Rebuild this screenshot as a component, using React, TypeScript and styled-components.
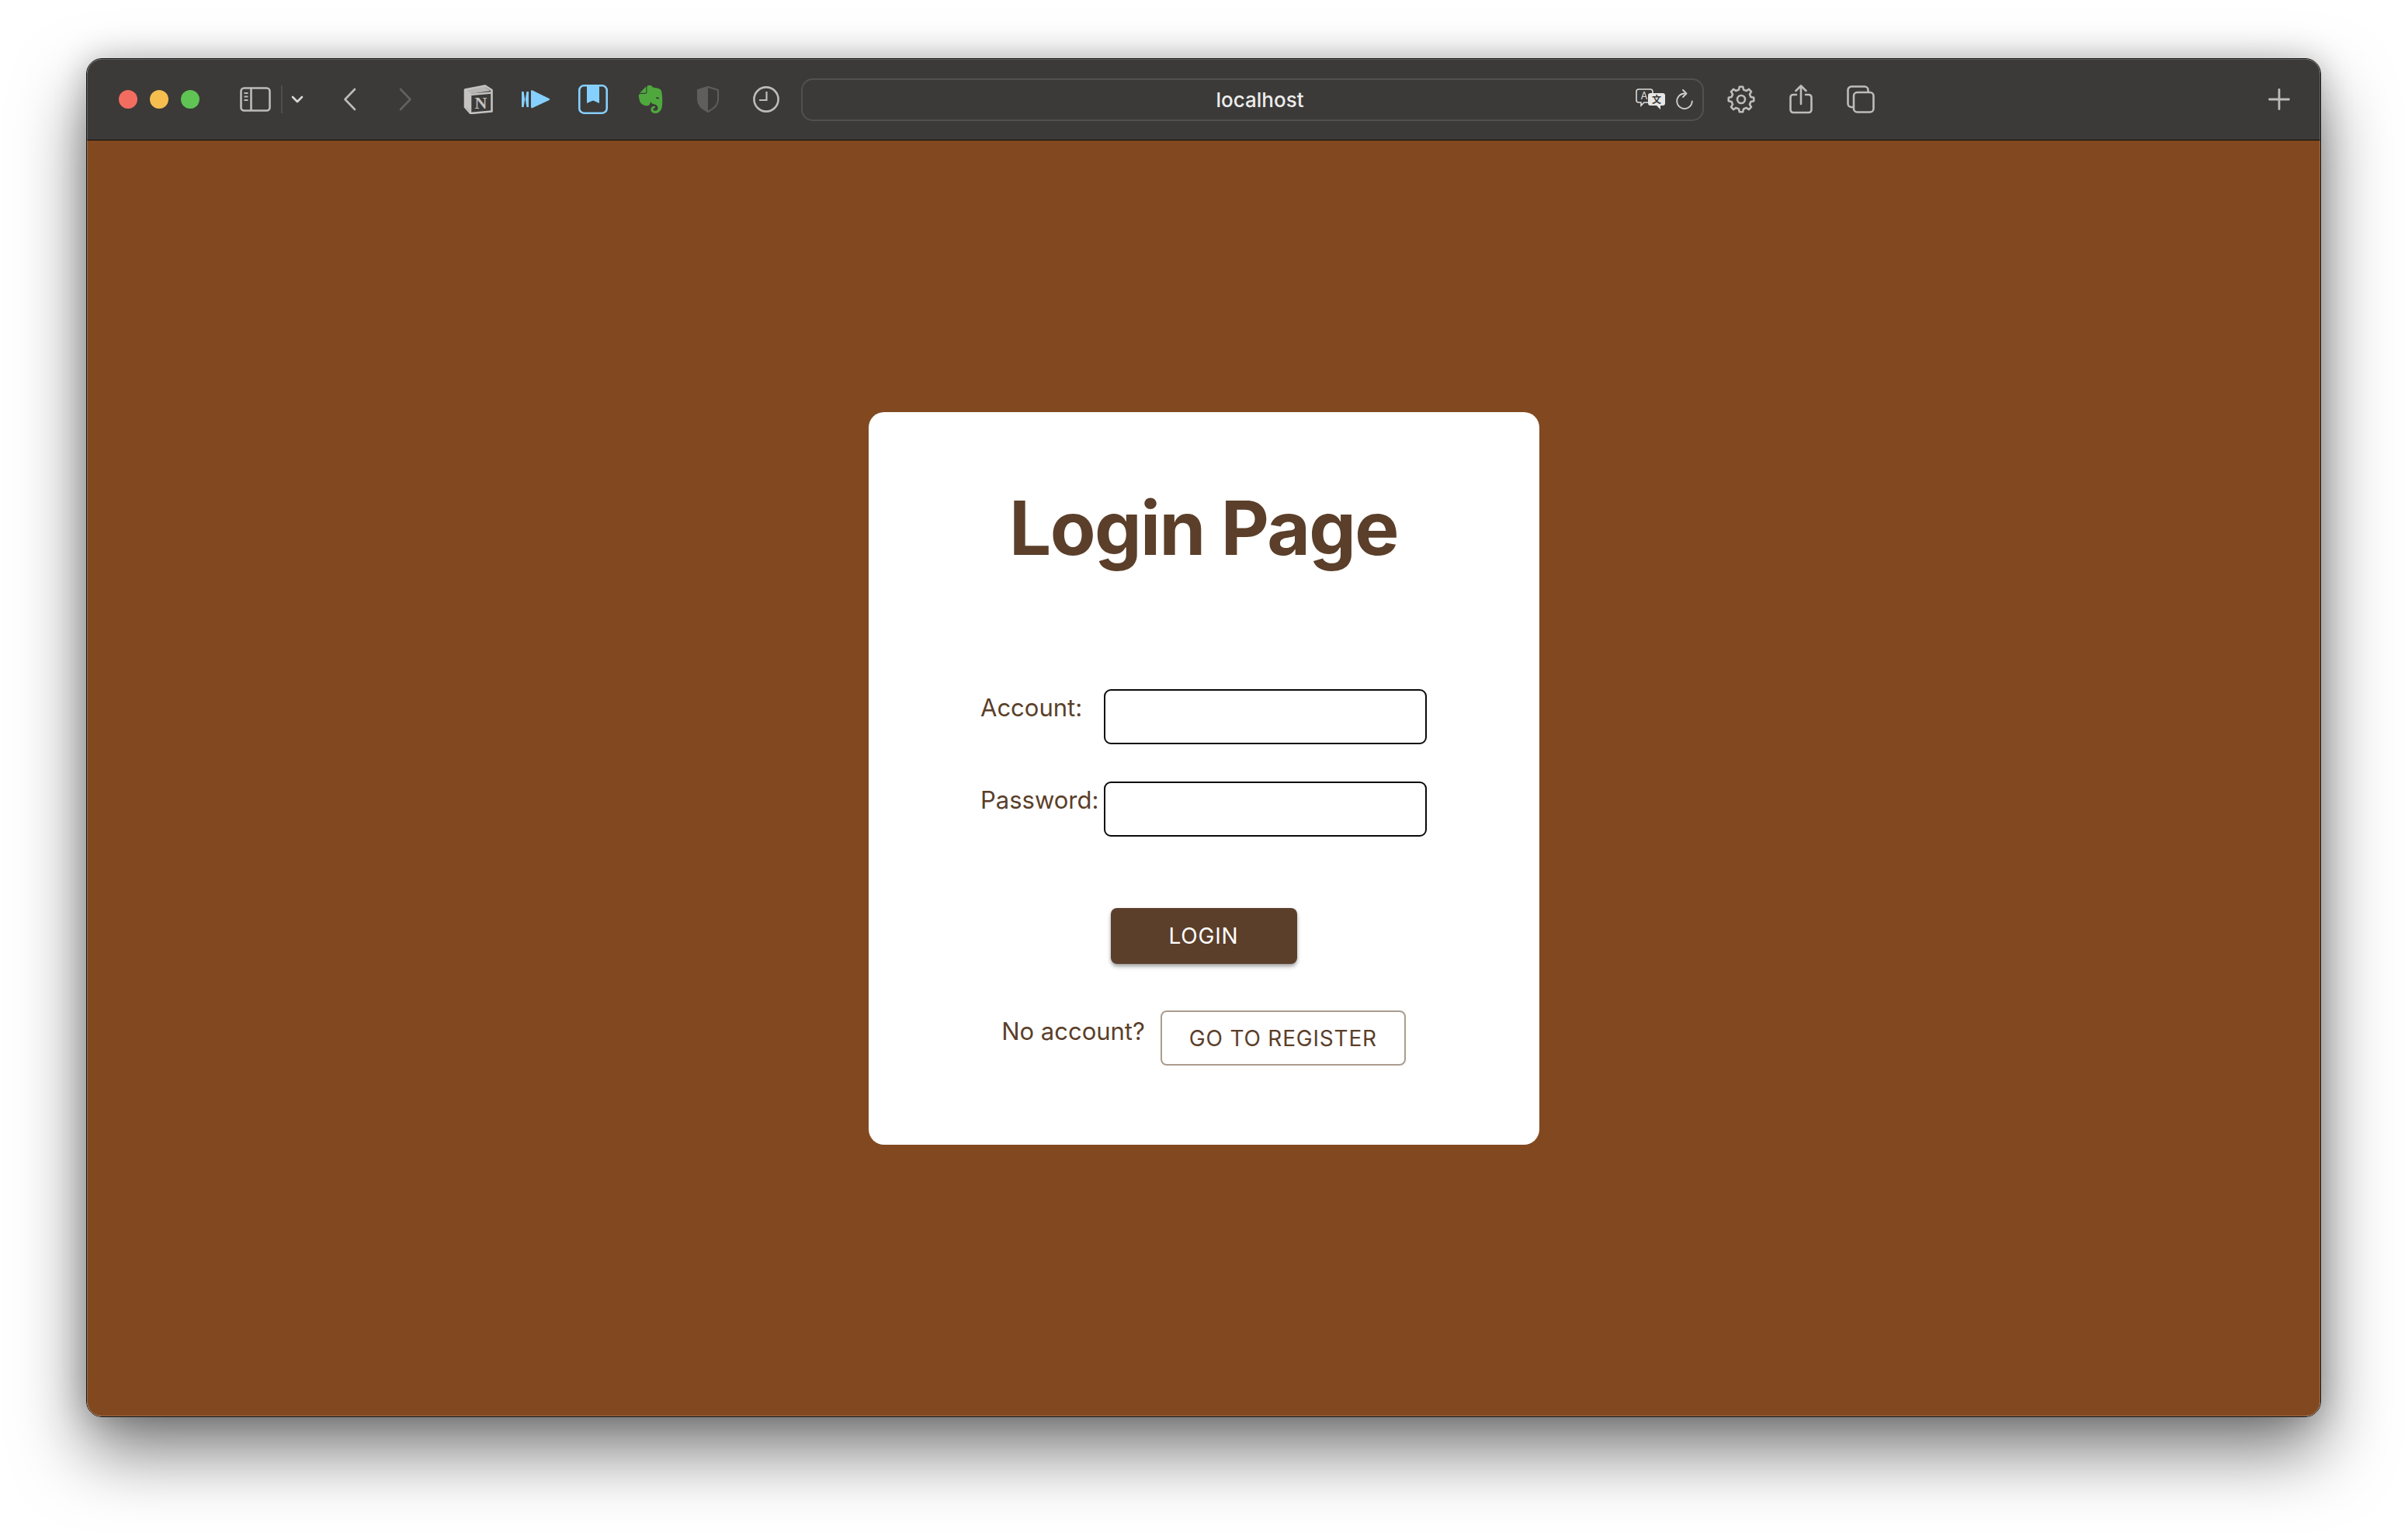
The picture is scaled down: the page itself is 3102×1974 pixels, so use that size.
import React from "react";
import styled, { createGlobalStyle } from "styled-components";
import { SiEvernote } from "react-icons/si";

const $brown = "#5b3f2a";
const $icon = "#bdbcba";

const GlobalStyle = createGlobalStyle`
  html, body {
    margin: 0;
    background: #fff;
    overflow: hidden;
  }
  * {
    box-sizing: border-box;
  }
`;

const Page = styled.div`
  width: 3102px;
  height: 1974px;
  padding: 75px 112px 148px 111px;
  font-family: Inter, "Liberation Sans", sans-serif;
`;

const Window = styled.div`
  position: relative;
  display: flex;
  flex-direction: column;
  height: 100%;
  border: 1px solid #111;
  border-radius: 20px;
  overflow: hidden;
  box-shadow: 0 44px 90px rgba(0, 0, 0, 0.52), 0 0 40px rgba(0, 0, 0, 0.22);
  &::after {
    content: "";
    position: absolute;
    inset: 0;
    border: 1px solid rgba(255, 255, 255, 0.2);
    border-radius: 19px;
    pointer-events: none;
  }
`;

const Toolbar = styled.header`
  display: flex;
  align-items: center;
  flex: 0 0 105px;
  padding: 0 39px 0 41px;
  background: #3b3a38;
  border-bottom: 1px solid #0c0c0c;
`;

const Lights = styled.div`
  display: flex;
  gap: 16px;
`;

const Light = styled.span<{ $color: string }>`
  width: 24px;
  height: 24px;
  border-radius: 50%;
  background: ${({ $color }) => $color};
`;

const Divider = styled.span`
  width: 2px;
  height: 36px;
  margin: 0 11px 0 13px;
  background: #4f4e4c;
`;

const Group = styled.div<{ $left: number; $gap?: number }>`
  display: flex;
  align-items: center;
  flex: none;
  margin-left: ${({ $left }) => $left}px;
  gap: ${({ $gap = 0 }) => $gap}px;
`;

const UrlBar = styled.div`
  position: relative;
  display: flex;
  align-items: center;
  justify-content: flex-end;
  width: 1163px;
  height: 55px;
  margin-left: 28px;
  padding-right: 12px;
  gap: 14px;
  flex: none;
  border: 2px solid #525150;
  border-radius: 15px;
`;

const UrlText = styled.span`
  position: absolute;
  left: 0;
  right: 0;
  padding-left: 19px;
  text-align: center;
  font-size: 26px;
  font-weight: 500;
  color: #ececec;
`;

const PlusSlot = styled.div`
  display: flex;
  margin-left: auto;
`;

const Main = styled.main`
  flex: 1;
  display: flex;
  align-items: center;
  justify-content: center;
  background: #824920;
`;

const Card = styled.section`
  display: flex;
  flex-direction: column;
  align-items: center;
  width: 864px;
  height: 944px;
  padding-top: 92px;
  background: #fff;
  border-radius: 20px;
  color: ${$brown};
`;

const Title = styled.h1`
  margin: 0 0 150px;
  font-size: 96px;
  line-height: 115px;
  font-weight: 700;
  letter-spacing: -1.6px;
  color: ${$brown};
`;

const FieldRow = styled.div`
  display: flex;
  width: 575px;
  margin-bottom: 48px;
`;

const FieldLabel = styled.label`
  flex: 0 0 159px;
  font-size: 31px;
  line-height: 48px;
`;

const TextBox = styled.input`
  width: 416px;
  height: 71px;
  background: #fff;
  border: 2.5px solid #0a0a0a;
  border-radius: 9px;
  outline: none;
`;

const Button = styled.button`
  font-family: inherit;
  font-size: 28px;
  font-weight: 400;
  line-height: 1;
  letter-spacing: 0.8px;
  border-radius: 8px;
  cursor: pointer;
`;

const LoginButton = styled(Button)`
  width: 240px;
  height: 72px;
  margin-top: 44px;
  color: #fff;
  background: ${$brown};
  border: none;
  box-shadow: 0 4px 6px -1px rgba(0, 0, 0, 0.3), 0 2px 4px rgba(0, 0, 0, 0.18);
`;

const RegisterRow = styled.div`
  display: flex;
  align-items: flex-start;
  gap: 20px;
  margin-top: 60px;
`;

const RegisterText = styled.span`
  font-size: 31px;
  line-height: 48px;
  margin-top: 3px;
`;

const RegisterButton = styled(Button)`
  width: 316px;
  height: 71px;
  color: ${$brown};
  background: #fff;
  border: 2px solid #aa9c8f;
`;

const SidebarIcon = () => (
  <svg width="40" height="32" viewBox="0 0 40 32" fill="none" stroke={$icon} strokeWidth="2.6">
    <rect x="1.5" y="1.5" width="37" height="29" rx="4" />
    <path d="M14.5 1.5v29" />
    <path d="M5.5 8h5M5.5 12.5h5M5.5 17h5" strokeWidth="2" />
  </svg>
);

const Chevron = ({ d, color, w, h, sw }: { d: string; color: string; w: number; h: number; sw: number }) => (
  <svg width={w} height={h} viewBox={`0 0 ${w} ${h}`} fill="none" stroke={color} strokeWidth={sw} strokeLinecap="round" strokeLinejoin="round">
    <path d={d} />
  </svg>
);

const NotionIcon = () => (
  <svg width="38" height="38" viewBox="0 0 38 38" fill="none">
    <path d="M2 6.5 L28 1.5 L36.5 7 V34.5 L9 37 L2 29 Z" fill="#3b3a38" stroke="#c4c3c1" strokeWidth="2.6" strokeLinejoin="round" />
    <path d="M2.5 6.5 L9 13 L36 10.5 M9 13 V36" stroke="#c4c3c1" strokeWidth="2.6" fill="none" />
    <path d="M3 8 L9 13.5 V35 L3 28.5 Z" fill="#c4c3c1" />
    <path d="M3 6.5 L27.5 2.5 L35 8 L9 12 Z" fill="#c4c3c1" opacity="0.9" />
    <text x="22.5" y="31" textAnchor="middle" fontFamily="'Liberation Serif', serif" fontWeight="700" fontSize="22" fill="#c4c3c1">N</text>
  </svg>
);

const PlayIcon = () => (
  <svg width="37" height="24" viewBox="0 0 37 24" fill="#86d0ff">
    <path d="M0 2h2.6l1.6 10-1.6 10H0z" />
    <path d="M9 2H6.4l-1.6 10 1.6 10H9z" />
    <path d="M12 1.5c0-1 1-1.6 2-1l21.5 10.4c1 .5 1 1.7 0 2.2L14 23c-1 .5-2 0-2-1z" />
  </svg>
);

const BookmarkIcon = () => (
  <svg width="38" height="38" viewBox="0 0 38 38" fill="none">
    <rect x="1.3" y="1.3" width="35.4" height="35.4" rx="6" stroke="#86d0ff" strokeWidth="2.6" />
    <path d="M11 2h16v22l-8-3.5-8 3.5z" fill="#86d0ff" />
  </svg>
);

const ShieldIcon = () => (
  <svg width="28" height="34" viewBox="0 0 28 34" fill="none">
    <path d="M14 1 L27 5 V18 C27 25 20 30 14 33 C8 30 1 25 1 18 V5 Z" fill="#3b3a38" stroke="#5f5e5d" strokeWidth="2" strokeLinejoin="round" />
    <path d="M14 1 L1 5 V18 C1 25 8 30 14 33 Z" fill="#5f5e5d" />
  </svg>
);

const ClockIcon = () => (
  <svg width="34" height="34" viewBox="0 0 34 34" fill="none" stroke={$icon} strokeWidth="2.6">
    <circle cx="17" cy="17" r="15.6" />
    <path d="M17.5 7v11H8" strokeWidth="2.2" />
  </svg>
);

const TranslateIcon = () => (
  <svg width="38" height="28" viewBox="0 0 38 28" fill="none">
    <path d="M4 1h15a3 3 0 0 1 3 3v11a3 3 0 0 1-3 3H11l-4 4v-4H4a3 3 0 0 1-3-3V4a3 3 0 0 1 3-3z" stroke="#dcdcdc" strokeWidth="1.6" />
    <text x="11" y="14" textAnchor="middle" fontFamily="Inter, sans-serif" fontSize="13" fill="#dcdcdc">A</text>
    <path d="M19 6h16a3 3 0 0 1 3 3v10a3 3 0 0 1-3 3h-3v5l-5-5h-8a3 3 0 0 1-3-3V9a3 3 0 0 1 3-3z" fill="#e6e6e6" />
    <text x="27" y="19" textAnchor="middle" fontFamily="'Noto Sans CJK SC', sans-serif" fontSize="12" fontWeight="700" fill="#3b3a38">文</text>
  </svg>
);

const ReloadIcon = () => (
  <svg width="22" height="26" viewBox="0 0 22 26" fill="none" stroke="#cfcfcd" strokeWidth="1.8" strokeLinecap="round" strokeLinejoin="round">
    <path d="M11 5.5a9.8 9.8 0 1 0 9.8 9.8" />
    <path d="M9 1l4.5 4.5L9 10" />
  </svg>
);

const gearPath = (() => {
  const teeth = 8;
  const outer = 16.4;
  const inner = 12.8;
  const pts: string[] = [];
  for (let i = 0; i < teeth; i++) {
    const base = (i * Math.PI * 2) / teeth - Math.PI / 2;
    const step = Math.PI / teeth;
    const at = (r: number, a: number) => `${(18 + r * Math.cos(a)).toFixed(2)} ${(18 + r * Math.sin(a)).toFixed(2)}`;
    pts.push(`${i === 0 ? "M" : "L"}${at(inner, base - step * 0.62)}`);
    pts.push(`L${at(outer, base - step * 0.34)}`);
    pts.push(`L${at(outer, base + step * 0.34)}`);
    pts.push(`L${at(inner, base + step * 0.62)}`);
  }
  return pts.join(" ") + " Z";
})();

const GearIcon = () => (
  <svg width="36" height="36" viewBox="0 0 36 36" fill="none" stroke={$icon} strokeWidth="2.6" strokeLinejoin="round">
    <path d={gearPath} />
    <circle cx="18" cy="18" r="5" />
  </svg>
);

const ShareIcon = () => (
  <svg width="30" height="38" viewBox="0 0 30 38" fill="none" stroke={$icon} strokeWidth="2.6" strokeLinecap="round" strokeLinejoin="round">
    <path d="M9 13H5a3.5 3.5 0 0 0-3.5 3.5v16A3.5 3.5 0 0 0 5 36h20a3.5 3.5 0 0 0 3.5-3.5v-16A3.5 3.5 0 0 0 25 13h-4" />
    <path d="M15 25V2M8.5 8L15 1.5 21.5 8" />
  </svg>
);

const TabsIcon = () => (
  <svg width="36" height="36" viewBox="0 0 36 36" fill="none" stroke={$icon} strokeWidth="2.6">
    <path d="M8 28H6a4.5 4.5 0 0 1-4.5-4.5V6A4.5 4.5 0 0 1 6 1.5h17A4.5 4.5 0 0 1 27.500 6v2" />
    <rect x="9" y="9" width="25.500" height="25.500" rx="4.500" />
  </svg>
);

const PlusIcon = () => (
  <svg width="28" height="28" viewBox="0 0 28 28" stroke={$icon} strokeWidth="2.8" strokeLinecap="round">
    <path d="M14 1.500v25M1.500 14h25" />
  </svg>
);

const App: React.FC = () => (
  <Page>
    <GlobalStyle />
    <Window>
      <Toolbar>
        <Lights>
          <Light $color="#f26d60" />
          <Light $color="#f5be4f" />
          <Light $color="#5fc454" />
        </Lights>
        <Group $left={52}>
          <SidebarIcon />
          <Divider />
          <Chevron w={16} h={10} sw={2.6} color="#d8d8d6" d="M2 2l6 6 6-6" />
        </Group>
        <Group $left={51} $gap={55}>
          <Chevron w={17} h={30} sw={2.6} color={$icon} d="M15 2L2.500 15 15 28" />
          <Chevron w={17} h={30} sw={2.6} color="#626160" d="M2 2l12.500 13L2 28" />
        </Group>
        <Group $left={66}>
          <NotionIcon />
          <Group $left={37}><PlayIcon /></Group>
          <Group $left={36}><BookmarkIcon /></Group>
          <Group $left={37}><SiEvernote size={36} color="#4fa83d" /></Group>
          <Group $left={42}><ShieldIcon /></Group>
          <Group $left={44}><ClockIcon /></Group>
        </Group>
        <UrlBar>
          <UrlText>localhost</UrlText>
          <TranslateIcon />
          <ReloadIcon />
        </UrlBar>
        <Group $left={30} $gap={44}>
          <GearIcon />
          <ShareIcon />
          <TabsIcon />
        </Group>
        <PlusSlot>
          <PlusIcon />
        </PlusSlot>
      </Toolbar>
      <Main>
        <Card>
          <Title>Login Page</Title>
          <FieldRow>
            <FieldLabel>Account:</FieldLabel>
            <TextBox type="text" />
          </FieldRow>
          <FieldRow>
            <FieldLabel>Password:</FieldLabel>
            <TextBox type="password" />
          </FieldRow>
          <LoginButton>LOGIN</LoginButton>
          <RegisterRow>
            <RegisterText>No account?</RegisterText>
            <RegisterButton>GO TO REGISTER</RegisterButton>
          </RegisterRow>
        </Card>
      </Main>
    </Window>
  </Page>
);

export default App;
